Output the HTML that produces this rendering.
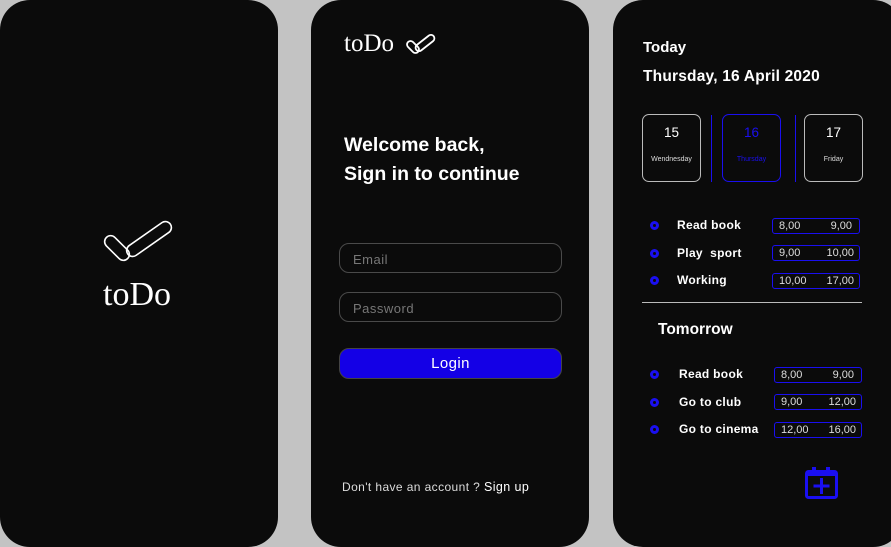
<!DOCTYPE html>
<html><head><meta charset="utf-8"><style>
*{margin:0;padding:0;box-sizing:border-box}
body{width:891px;height:547px;background:#c3c3c3;position:relative;overflow:hidden;font-family:"Liberation Sans",sans-serif;color:#fff}
.p{position:absolute;top:0;height:547px;background:#0b0b0b;border-radius:30px}
.a{position:absolute;white-space:nowrap}
.b{font-weight:bold}
.inp{position:absolute;left:339px;width:223px;height:30px;border:1px solid #4a4a4a;border-radius:10px;color:#777;font-size:13px;padding:8px 0 0 13px;letter-spacing:0.5px}
.card{position:absolute;top:114px;width:59px;height:68px;border:1px solid #bbb;border-radius:7px;text-align:center}
.card .n{font-size:13.5px;margin-top:10px}
.card .d{font-size:7px;margin-top:16px;color:#ddd}
.dot{position:absolute;width:9px;height:9px;border:3px solid #1a0ff0;border-radius:50%}
.t{position:absolute;font-size:12px;font-weight:bold;letter-spacing:0.3px}
.tb{position:absolute;width:88px;height:16px;border:1px solid #1a0ff0;border-radius:3px;font-size:11px;color:#ddd}
.tb span{position:absolute;top:1px}
</style></head><body>
<div class="p" style="left:0;width:278px"></div>
<div class="p" style="left:311px;width:278px"></div>
<div class="p" style="left:613px;width:290px"></div>

<svg class="a" style="left:0;top:0" width="278" height="300">
<g fill="none" stroke="#fff" stroke-width="1.6">
<rect x="-15" y="-6" width="30" height="12" rx="6" transform="translate(117,248) rotate(45)"/>
<rect x="-26" y="-6" width="52" height="12" rx="6" transform="translate(149,239) rotate(-35)"/>
</g></svg>
<div class="a" style="left:103px;top:276px;font-family:'Liberation Serif',serif;font-size:34px">toDo</div>

<div class="a" style="left:344px;top:30px;font-family:'Liberation Serif',serif;font-size:25px">toDo</div>
<svg class="a" style="left:404px;top:32px" width="32" height="24">
<g fill="none" stroke="#fff" stroke-width="1.8">
<rect x="-7" y="-3.5" width="14" height="7" rx="3.5" transform="translate(9,15) rotate(45)"/>
<rect x="-11" y="-3.5" width="22" height="7" rx="3.5" transform="translate(21,11) rotate(-38)"/>
</g></svg>
<div class="a b" style="left:344px;top:131px;font-size:19.5px;line-height:29px">Welcome back,<br>Sign in to continue</div>
<div class="inp" style="top:243px">Email</div>
<div class="inp" style="top:292px">Password</div>
<div class="a" style="left:339px;top:348px;width:223px;height:31px;background:#1400e6;border:1px solid #444;border-radius:10px;text-align:center;font-size:15px;line-height:29px;letter-spacing:0.4px">Login</div>
<div class="a" style="left:342px;top:480px;font-size:12px;color:#ddd;letter-spacing:0.4px">Don't have an account ? <span style="color:#fff;font-size:12.5px">Sign up</span></div>

<div class="a b" style="left:643px;top:39px;font-size:15px">Today</div>
<div class="a b" style="left:643px;top:68px;font-size:15.5px;letter-spacing:0.2px">Thursday, 16 April 2020</div>
<div class="card" style="left:642px"><div class="n">15</div><div class="d">Wendnesday</div></div>
<div class="a" style="left:711px;top:115px;width:1px;height:67px;background:#1a0ff0"></div>
<div class="card" style="left:722px;border-color:#1a0ff0;color:#1a0ff0"><div class="n">16</div><div class="d" style="color:#1a0ff0">Thursday</div></div>
<div class="a" style="left:795px;top:115px;width:1px;height:67px;background:#1a0ff0"></div>
<div class="card" style="left:804px"><div class="n">17</div><div class="d">Friday</div></div>

<div class="dot" style="left:650px;top:221px"></div><div class="t" style="left:677px;top:218px">Read book</div>
<div class="tb" style="left:772px;top:218px"><span style="left:6px">8,00</span><span style="right:7px">9,00</span></div>
<div class="dot" style="left:650px;top:249px"></div><div class="t" style="left:677px;top:246px">Play&nbsp; sport</div>
<div class="tb" style="left:772px;top:245px"><span style="left:6px">9,00</span><span style="right:5px">10,00</span></div>
<div class="dot" style="left:650px;top:276px"></div><div class="t" style="left:677px;top:273px">Working</div>
<div class="tb" style="left:772px;top:273px"><span style="left:6px">10,00</span><span style="right:5px">17,00</span></div>

<div class="a" style="left:642px;top:302px;width:220px;height:1px;background:#bbb"></div>
<div class="a b" style="left:658px;top:321px;font-size:15.5px">Tomorrow</div>

<div class="dot" style="left:650px;top:370px"></div><div class="t" style="left:679px;top:367px">Read book</div>
<div class="tb" style="left:774px;top:367px"><span style="left:6px">8,00</span><span style="right:7px">9,00</span></div>
<div class="dot" style="left:650px;top:398px"></div><div class="t" style="left:679px;top:395px">Go to club</div>
<div class="tb" style="left:774px;top:394px"><span style="left:6px">9,00</span><span style="right:5px">12,00</span></div>
<div class="dot" style="left:650px;top:425px"></div><div class="t" style="left:679px;top:422px">Go to cinema</div>
<div class="tb" style="left:774px;top:422px"><span style="left:6px">12,00</span><span style="right:5px">16,00</span></div>

<svg class="a" style="left:804px;top:466px" width="36" height="34">
<g fill="#1a0ff0">
<rect x="8" y="1" width="4" height="6"/><rect x="22" y="1" width="4" height="6"/>
</g>
<rect x="2.5" y="5.5" width="30" height="26" rx="2" fill="none" stroke="#1a0ff0" stroke-width="3"/>
<rect x="4" y="7" width="27" height="3" fill="#1a0ff0"/>
<rect x="16" y="12" width="3" height="16" fill="#1a0ff0"/>
<rect x="9.5" y="18.5" width="16" height="3" fill="#1a0ff0"/>
</svg>
</body></html>
